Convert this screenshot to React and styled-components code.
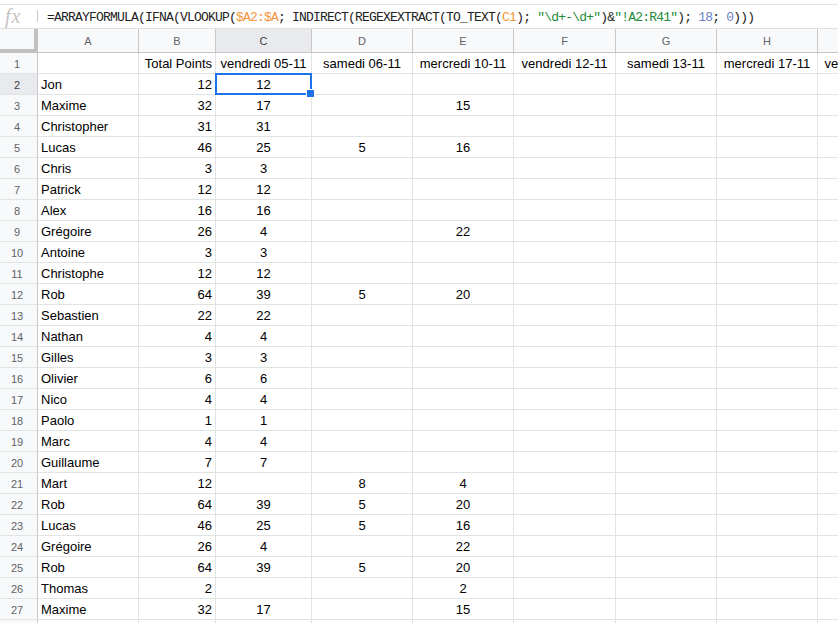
import React from 'react'
import styled, { createGlobalStyle } from 'styled-components'

// column widths in px, each includes its 1px right grid line
const widths = [38, 101, 77, 96, 101, 101, 102, 101, 101, 100]
const letters = ['A', 'B', 'C', 'D', 'E', 'F', 'G', 'H', 'I']
const template = widths.map(w => `${w}px`).join(' ')

const colors = {
  grid: '#e2e3e3',
  headerLine: '#c7c7c7',
  headerBg: '#f8f9fa',
  headerActive: '#e8eaed',
  headerText: '#5f6368',
  blue: '#1a73e8',
}

const formula = [
  { t: '=ARRAYFORMULA(IFNA(VLOOKUP(' },
  { t: '$A2:$A', k: 'ref' },
  { t: '; INDIRECT(REGEXEXTRACT(TO_TEXT(' },
  { t: 'C1', k: 'ref' },
  { t: '); ' },
  { t: '"\\d+-\\d+"', k: 'str' },
  { t: ')&' },
  { t: '"!A2:R41"', k: 'str' },
  { t: '); ' },
  { t: '18', k: 'num' },
  { t: '; ' },
  { t: '0', k: 'num' },
  { t: ')))' },
]

const titles = [
  '',
  'Total Points',
  'vendredi 05-11',
  'samedi 06-11',
  'mercredi 10-11',
  'vendredi 12-11',
  'samedi 13-11',
  'mercredi 17-11',
  'vendredi 19-11',
]

const rows = [
  ['Jon', 12, 12],
  ['Maxime', 32, 17, '', 15],
  ['Christopher', 31, 31],
  ['Lucas', 46, 25, 5, 16],
  ['Chris', 3, 3],
  ['Patrick', 12, 12],
  ['Alex', 16, 16],
  ['Grégoire', 26, 4, '', 22],
  ['Antoine', 3, 3],
  ['Christophe', 12, 12],
  ['Rob', 64, 39, 5, 20],
  ['Sebastien', 22, 22],
  ['Nathan', 4, 4],
  ['Gilles', 3, 3],
  ['Olivier', 6, 6],
  ['Nico', 4, 4],
  ['Paolo', 1, 1],
  ['Marc', 4, 4],
  ['Guillaume', 7, 7],
  ['Mart', 12, '', 8, 4],
  ['Rob', 64, 39, 5, 20],
  ['Lucas', 46, 25, 5, 16],
  ['Grégoire', 26, 4, '', 22],
  ['Rob', 64, 39, 5, 20],
  ['Thomas', 2, '', '', 2],
  ['Maxime', 32, 17, '', 15],
  [],
]

const GlobalStyle = createGlobalStyle`
  html, body {
    margin: 0;
    padding: 0;
    background: #fff;
    overflow: hidden;
  }
  * {
    box-sizing: border-box;
  }
`

const Page = styled.div`
  width: 838px;
  height: 623px;
  overflow: hidden;
  padding-top: 4px;
  font-family: 'Liberation Sans', Arial, sans-serif;
`

const FormulaBar = styled.div`
  display: flex;
  align-items: center;
  height: 25px;
  border-top: 1px solid #e1e1e1;
  border-bottom: 1px solid #e1e1e1;
`

const FxIcon = styled.div`
  width: 38px;
  height: 100%;
  display: flex;
  align-items: center;
  justify-content: flex-start;
  padding-left: 5px;
  position: relative;
  font-family: 'Liberation Serif', serif;
  font-style: italic;
  font-size: 20px;
  color: #c4c4c4;
  letter-spacing: 1px;

  &::after {
    content: '';
    position: absolute;
    right: 0;
    top: 5px;
    width: 1px;
    height: 12px;
    background: #c4c4c4;
  }
`

const FormulaText = styled.div`
  padding-left: 9px;
  font-family: 'Liberation Mono', monospace;
  font-size: 13px;
  letter-spacing: -0.8px;
  color: #222;
  white-space: pre;
  padding-top: 1px;
`

const Token = styled.span`
  color: ${p =>
    p.$kind === 'ref'
      ? '#f4953c'
      : p.$kind === 'str'
      ? '#1e8a3a'
      : p.$kind === 'num'
      ? '#6e7fc2'
      : 'inherit'};
`

const Grid = styled.div`
  display: grid;
  grid-template-columns: ${template};
`

const Corner = styled.div`
  height: 24px;
  background: ${colors.headerBg};
  border-right: 4px solid #c0c0c0;
  border-bottom: 4px solid #c0c0c0;
`

const ColHeader = styled.div`
  height: 24px;
  display: flex;
  align-items: center;
  justify-content: center;
  background: ${p => (p.$active ? colors.headerActive : colors.headerBg)};
  border-right: 1px solid ${colors.headerLine};
  border-bottom: 1px solid ${colors.headerLine};
  color: ${p => (p.$active ? '#3c4043' : colors.headerText)};
  font-size: 11px;
  padding-top: 1px;
`

const RowHeader = styled.div`
  height: 21px;
  display: flex;
  align-items: center;
  justify-content: center;
  padding-right: 3px;
  padding-top: 1px;
  background: ${p => (p.$active ? colors.headerActive : colors.headerBg)};
  border-right: 1px solid ${colors.headerLine};
  border-bottom: 1px solid ${colors.grid};
  color: ${p => (p.$active ? '#3c4043' : colors.headerText)};
  font-size: 11px;
`

const Cell = styled.div`
  position: relative;
  height: 21px;
  line-height: 18px;
  padding: 2px 3px 0 3px;
  border-right: 1px solid ${colors.grid};
  border-bottom: 1px solid ${colors.grid};
  font-size: 13px;
  color: #000;
  white-space: nowrap;
  text-align: ${p => p.$align};
  z-index: ${p => (p.$selected ? 2 : 'auto')};
  overflow: ${p => (p.$selected ? 'visible' : 'hidden')};

  ${p =>
    p.$selected &&
    `
    &::before {
      content: '';
      position: absolute;
      top: -1px;
      left: -1px;
      right: -1px;
      bottom: -1px;
      border: 2px solid ${colors.blue};
      pointer-events: none;
    }
    &::after {
      content: '';
      position: absolute;
      right: -4px;
      bottom: -4px;
      width: 7px;
      height: 7px;
      background: ${colors.blue};
      border: 1px solid #fff;
    }
  `}
`

const alignFor = col => (col === 0 ? 'left' : col === 1 ? 'right' : 'center')

export default function App() {
  return (
    <Page>
      <GlobalStyle />
      <FormulaBar>
        <FxIcon>fx</FxIcon>
        <FormulaText>
          {formula.map((part, i) => (
            <Token key={i} $kind={part.k}>
              {part.t}
            </Token>
          ))}
        </FormulaText>
      </FormulaBar>
      <Grid>
        <Corner />
        {letters.map(l => (
          <ColHeader key={l} $active={l === 'C'}>
            {l}
          </ColHeader>
        ))}

        <RowHeader>1</RowHeader>
        {titles.map((t, c) => (
          <Cell key={`t${c}`} $align={alignFor(c)}>
            {t}
          </Cell>
        ))}

        {rows.map((row, r) => {
          const n = r + 2
          return (
            <React.Fragment key={n}>
              <RowHeader $active={n === 2}>{n}</RowHeader>
              {letters.map((l, c) => (
                <Cell key={l} $align={alignFor(c)} $selected={n === 2 && c === 2}>
                  {row[c] ?? ''}
                </Cell>
              ))}
            </React.Fragment>
          )
        })}
      </Grid>
    </Page>
  )
}
